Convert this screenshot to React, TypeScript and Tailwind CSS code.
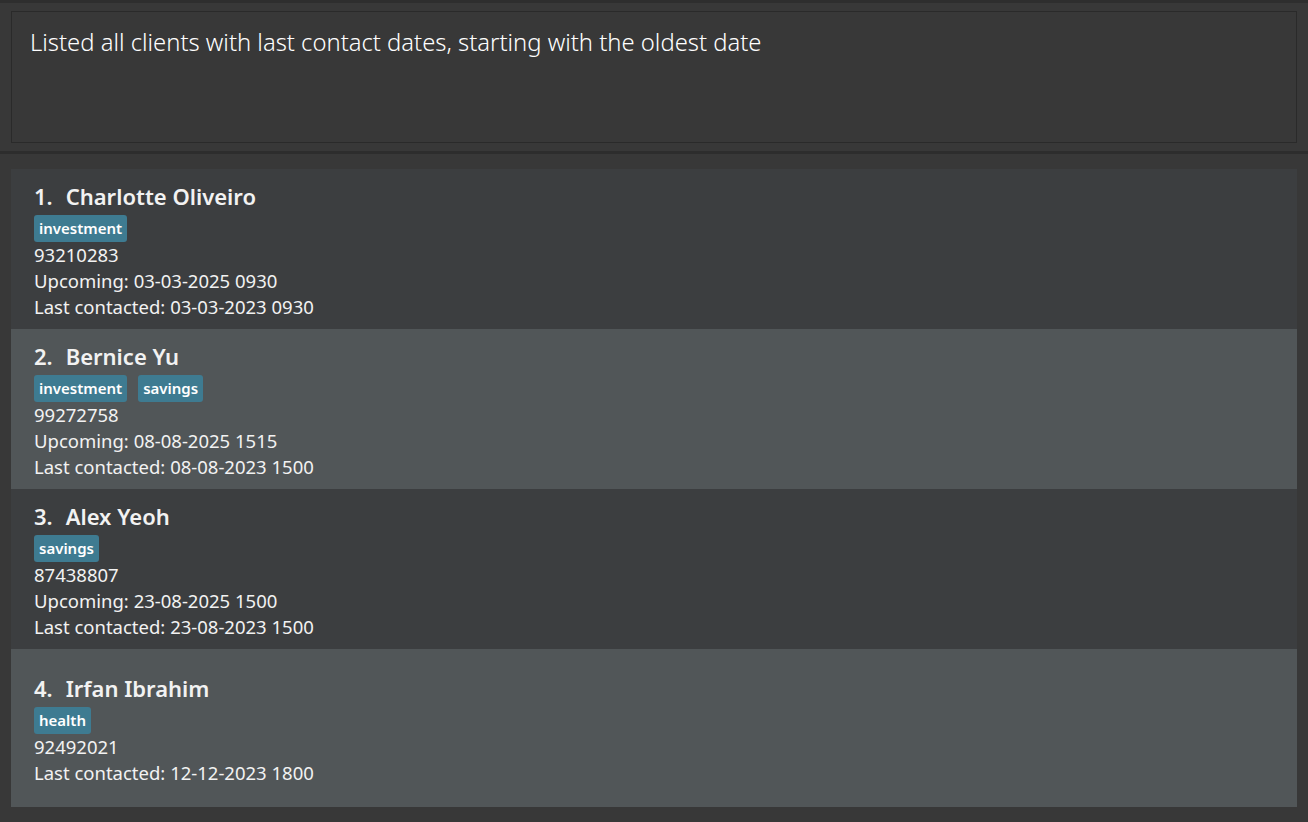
import React from "react";

type Client = {
  name: string;
  tags: string[];
  phone: string;
  upcoming?: string;
  last: string;
};

const clients: Client[] = [
  { name: "Charlotte Oliveiro", tags: ["investment"], phone: "93210283", upcoming: "03-03-2025 0930", last: "03-03-2023 0930" },
  { name: "Bernice Yu", tags: ["investment", "savings"], phone: "99272758", upcoming: "08-08-2025 1515", last: "08-08-2023 1500" },
  { name: "Alex Yeoh", tags: ["savings"], phone: "87438807", upcoming: "23-08-2025 1500", last: "23-08-2023 1500" },
  { name: "Irfan Ibrahim", tags: ["health"], phone: "92492021", last: "12-12-2023 1800" },
];

const font = { fontFamily: '"Segoe UI", "Noto Sans", "Open Sans", sans-serif' };

function Card({ c, i }: { c: Client; i: number }) {
  const bg = i % 2 === 0 ? "bg-[#3c3e40]" : "bg-[#515658]";
  const h = i === 3 ? "h-[158px]" : "h-[160px]";
  return (
    <div className={`${bg} ${h} flex flex-col justify-center pl-[23px] pt-[12px] pb-[9px] text-[#f2f2f2]`}>
      <div className="flex h-[30px] items-center text-[22px] font-semibold leading-[30px]">
        <span className="mr-[13px]">{i + 1}.</span>
        <span>{c.name}</span>
      </div>
      <div className="mt-[4px] flex h-[27px] gap-[11px]">
        {c.tags.map((t) => (
          <span key={t} className="flex h-[27px] items-center rounded-[3px] bg-[#3e7b91] px-[5px] text-[15px] font-semibold text-white">
            {t}
          </span>
        ))}
      </div>
      <div className="text-[18.5px] leading-[26px]">{c.phone}</div>
      {c.upcoming && <div className="text-[18.5px] leading-[26px]">Upcoming: {c.upcoming}</div>}
      <div className="text-[18.5px] leading-[26px]">Last contacted: {c.last}</div>
    </div>
  );
}

export default function App() {
  return (
    <div className="h-[822px] w-[1308px] overflow-hidden bg-[#383838]" style={font}>
      <div className="h-[3px] bg-[#2e2e2e]" />
      <div className="px-[11px] pt-[8px] pb-[8px]">
        <div className="h-[132px] border border-[#2a2a2a] bg-[#383838] px-[18px] pt-[13px] text-[23.8px] font-light text-white">
          Listed all clients with last contact dates, starting with the oldest date
        </div>
      </div>
      <div className="h-[3px] bg-[#2d2d2d]" />
      <div className="px-[11px] pt-[15px]">
        {clients.map((c, i) => (
          <Card key={c.name} c={c} i={i} />
        ))}
      </div>
    </div>
  );
}
